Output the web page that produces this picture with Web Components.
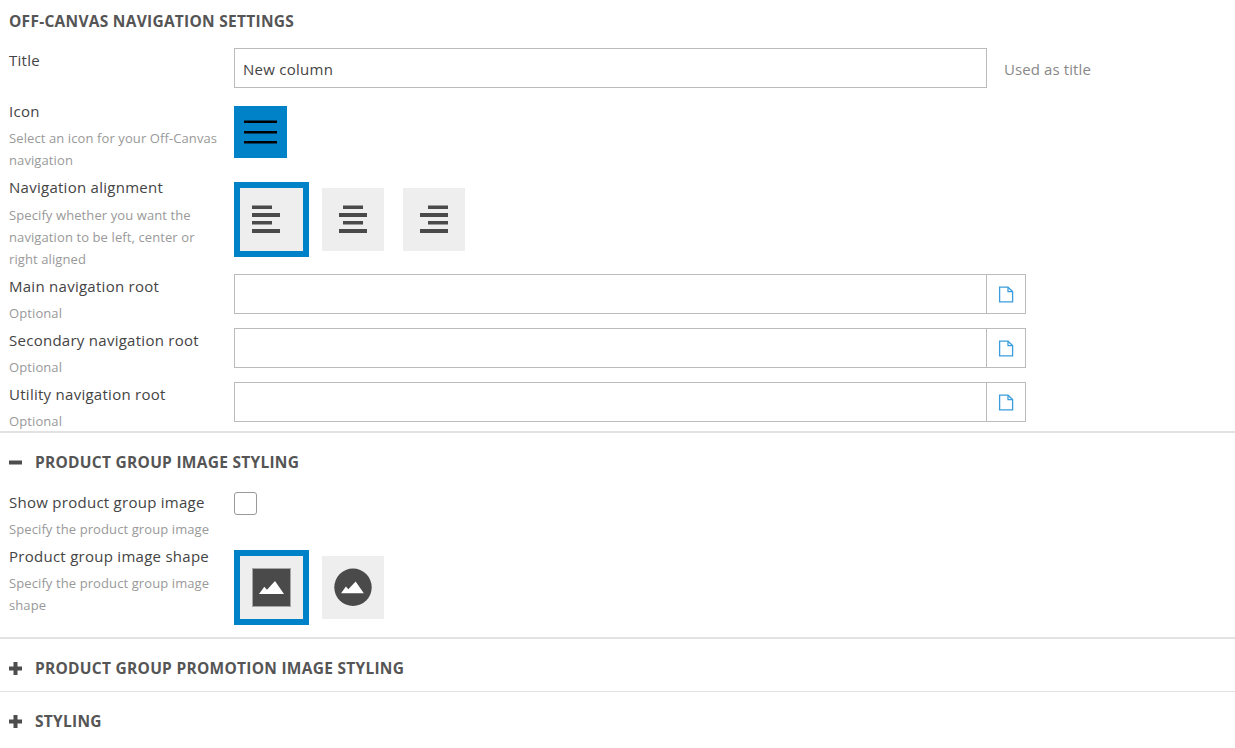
<!DOCTYPE html>
<html>
<head>
<meta charset="utf-8">
<title>Off-canvas navigation settings</title>
<style>
	html, body { margin: 0; background: #fff; }
	body { font-family: "Open Sans", "Liberation Sans", sans-serif; font-size: 15px; color: #444; overflow: hidden; height: 748px; }
</style>
</head>
<body>
<section-heading style="padding:10px 0 17px 9px">Off-canvas navigation settings</section-heading>
<field-row label="Title" offset="-1" style="height:46px;--label-gap:1px"><text-field value="New column" hint="Used as title"></text-field></field-row>
<field-row label="Icon" desc="Select an icon for your Off-Canvas navigation" offset="5"><icon-swatch></icon-swatch></field-row>
<field-row label="Navigation alignment" desc="Specify whether you want the navigation to be left, center or right aligned" offset="5" style="--desc-gap:6px">
	<choice-group>
		<choice-tile icon="left" selected></choice-tile>
		<choice-tile icon="center"></choice-tile>
		<choice-tile icon="right"></choice-tile>
	</choice-group>
</field-row>
<field-row label="Main navigation root" desc="Optional" offset="-2"><text-field picker></text-field></field-row>
<field-row label="Secondary navigation root" desc="Optional" offset="-2"><text-field picker></text-field></field-row>
<field-row label="Utility navigation root" desc="Optional" offset="-2" style="margin-bottom:-1px"><text-field picker></text-field></field-row>
<section-heading toggle="minus" rule="2" style="padding-bottom:19px">Product group image styling</section-heading>
<field-row label="Show product group image" desc="Specify the product group image"><check-box></check-box></field-row>
<field-row label="Product group image shape" desc="Specify the product group image shape" offset="4" style="height:91px;margin-bottom:0">
	<choice-group>
		<choice-tile icon="square" selected></choice-tile>
		<choice-tile icon="circle"></choice-tile>
	</choice-group>
</field-row>
<section-heading toggle="plus" rule="2" style="padding-bottom:12px">Product group promotion image styling</section-heading>
<section-heading toggle="plus" rule="1">Styling</section-heading>

<script>
const MOUNTAIN = "M7 26 12.3 18.7 15 21.7 23 13 32 26Z";
const ICONS = {
	left: '<rect x="12" y="17.5" width="20" height="3.5"/><rect x="12" y="25" width="28" height="4"/><rect x="12" y="33" width="20" height="3.5"/><rect x="12" y="41" width="28" height="4"/>',
	center: '<rect x="21" y="17.5" width="20" height="3.5"/><rect x="17" y="25" width="28" height="4"/><rect x="21" y="33" width="20" height="3.5"/><rect x="17" y="41" width="28" height="4"/>',
	right: '<rect x="25" y="17.5" width="20" height="3.5"/><rect x="17" y="25" width="28" height="4"/><rect x="25" y="33" width="20" height="3.5"/><rect x="17" y="41" width="28" height="4"/>',
	square: '<rect x="12.5" y="12.5" width="38" height="38" stroke="#a5a5a5"/><path fill="#fff" transform="translate(12 12)" d="' + MOUNTAIN + '"/>',
	circle: '<circle cx="31" cy="31.3" r="18.7"/><path fill="#fff" transform="translate(12.7 13.6) scale(.91)" d="' + MOUNTAIN + '"/>'
};

class SectionHeading extends HTMLElement {
	connectedCallback() {
		var shadow = this.attachShadow({mode: "open"});
		var toggle = this.getAttribute("toggle");
		var rule = this.getAttribute("rule") || 0;
		var mark = "";
		if (toggle) {
			var bars = '<rect x="0" y="4.5" width="13" height="4"/>';
			if (toggle == "plus") bars += '<rect x="4.5" y="0" width="4" height="13"/>';
			mark = '<svg width="13" height="13" viewBox="0 0 13 13" fill="#4d4d4d">' + bars + '</svg>';
		}
		shadow.innerHTML = `<style>
			:host { display: flex; align-items: center; gap: 13px; padding: 18px 0 0 9px; line-height: 22px;
				border-top: ${rule}px solid #e2e2e2; font-size: 15.5px; letter-spacing: 0.27px; font-weight: 700; color: #555; text-transform: uppercase; }
			svg { flex: none; }
		</style>${mark}<span><slot></slot></span>`;
	}
}
customElements.define("section-heading", SectionHeading);

class FieldRow extends HTMLElement {
	connectedCallback() {
		var shadow = this.attachShadow({mode: "open"});
		var desc = this.getAttribute("desc");
		var offset = this.getAttribute("offset") || 0;
		shadow.innerHTML = `<style>
			:host { display: grid; grid-template-columns: 225px 1fr; padding-left: 9px; margin-bottom: 6px; box-sizing: border-box; }
			.label { font-size: 15px; letter-spacing: 0.27px; line-height: 21px; color: #444; margin-top: var(--label-gap, 0); }
			.desc { font-size: 13px; letter-spacing: 0.1px; line-height: 22px; color: #999; margin-top: var(--desc-gap, 5px); width: 212px; }
			.control { margin-top: ${offset}px; }
		</style>
		<div>
			<div class="label">${this.getAttribute("label")}</div>
			${desc ? '<div class="desc">' + desc + '</div>' : ""}
		</div>
		<div class="control"><slot></slot></div>`;
	}
}
customElements.define("field-row", FieldRow);

class TextField extends HTMLElement {
	connectedCallback() {
		var shadow = this.attachShadow({mode: "open"});
		var hint = this.getAttribute("hint");
		var picker = this.hasAttribute("picker");
		shadow.innerHTML = `<style>
			:host { display: flex; align-items: center; height: 40px; }
			.box { display: flex; align-items: center; box-sizing: border-box; width: 753px; height: 40px; padding: 2px 0 0 8px;
				border: 1px solid #bbb; font-size: 15px; letter-spacing: 0.27px; color: #444; }
			.pick { display: flex; align-items: center; justify-content: center; box-sizing: border-box; width: 39px; height: 40px;
				border: 1px solid #bbb; border-left: 0; }
			.hint { margin-left: 17px; padding-top: 2px; font-size: 15px; letter-spacing: 0.1px; color: #888; }
		</style>
		<div class="box">${this.getAttribute("value") || ""}</div>
		${picker ? `<div class="pick"><svg width="16" height="17" viewBox="0 0 16 17" fill="none" stroke="#3b9ddd" stroke-width="1.3">
			<path d="M1.6 1.2H10L14.6 5.6V15.8H1.6Z"/><path d="M10 1.2V5.6H14.6"/></svg></div>` : ""}
		${hint ? '<span class="hint">' + hint + '</span>' : ""}`;
	}
}
customElements.define("text-field", TextField);

class IconSwatch extends HTMLElement {
	connectedCallback() {
		var shadow = this.attachShadow({mode: "open"});
		shadow.innerHTML = `<style>
			:host { display: flex; align-items: center; justify-content: center; width: 53px; height: 52px; background: #0082c8; }
		</style>
		<svg width="33" height="24" viewBox="0 0 33 24" fill="#000">
			<rect y="0.5" width="33" height="2.5"/><rect y="11" width="33" height="2.5"/><rect y="21" width="33" height="2.5"/>
		</svg>`;
	}
}
customElements.define("icon-swatch", IconSwatch);

class ChoiceGroup extends HTMLElement {
	connectedCallback() {
		this.attachShadow({mode: "open"}).innerHTML = `<style>
			:host { display: flex; gap: 19px; padding: 6px; }
		</style><slot></slot>`;
	}
}
customElements.define("choice-group", ChoiceGroup);

class ChoiceTile extends HTMLElement {
	connectedCallback() {
		var shadow = this.attachShadow({mode: "open"});
		var selected = this.hasAttribute("selected");
		shadow.innerHTML = `<style>
			:host { display: block; width: ${selected ? 63 : 62}px; height: 63px; background: #eee; ${selected ? "box-shadow: 0 0 0 6px #0082c8;" : ""} }
			svg { display: block; }
		</style>
		<svg width="63" height="63" viewBox="0 0 63 63" fill="#4a4a4a">${ICONS[this.getAttribute("icon")]}</svg>`;
	}
}
customElements.define("choice-tile", ChoiceTile);

class CheckBox extends HTMLElement {
	connectedCallback() {
		this.attachShadow({mode: "open"}).innerHTML = `<style>
			:host { display: block; box-sizing: border-box; width: 23px; height: 23px; border: 1px solid #999; border-radius: 3px; background: #fff; }
		</style>`;
	}
}
customElements.define("check-box", CheckBox);
</script>
</body>
</html>
